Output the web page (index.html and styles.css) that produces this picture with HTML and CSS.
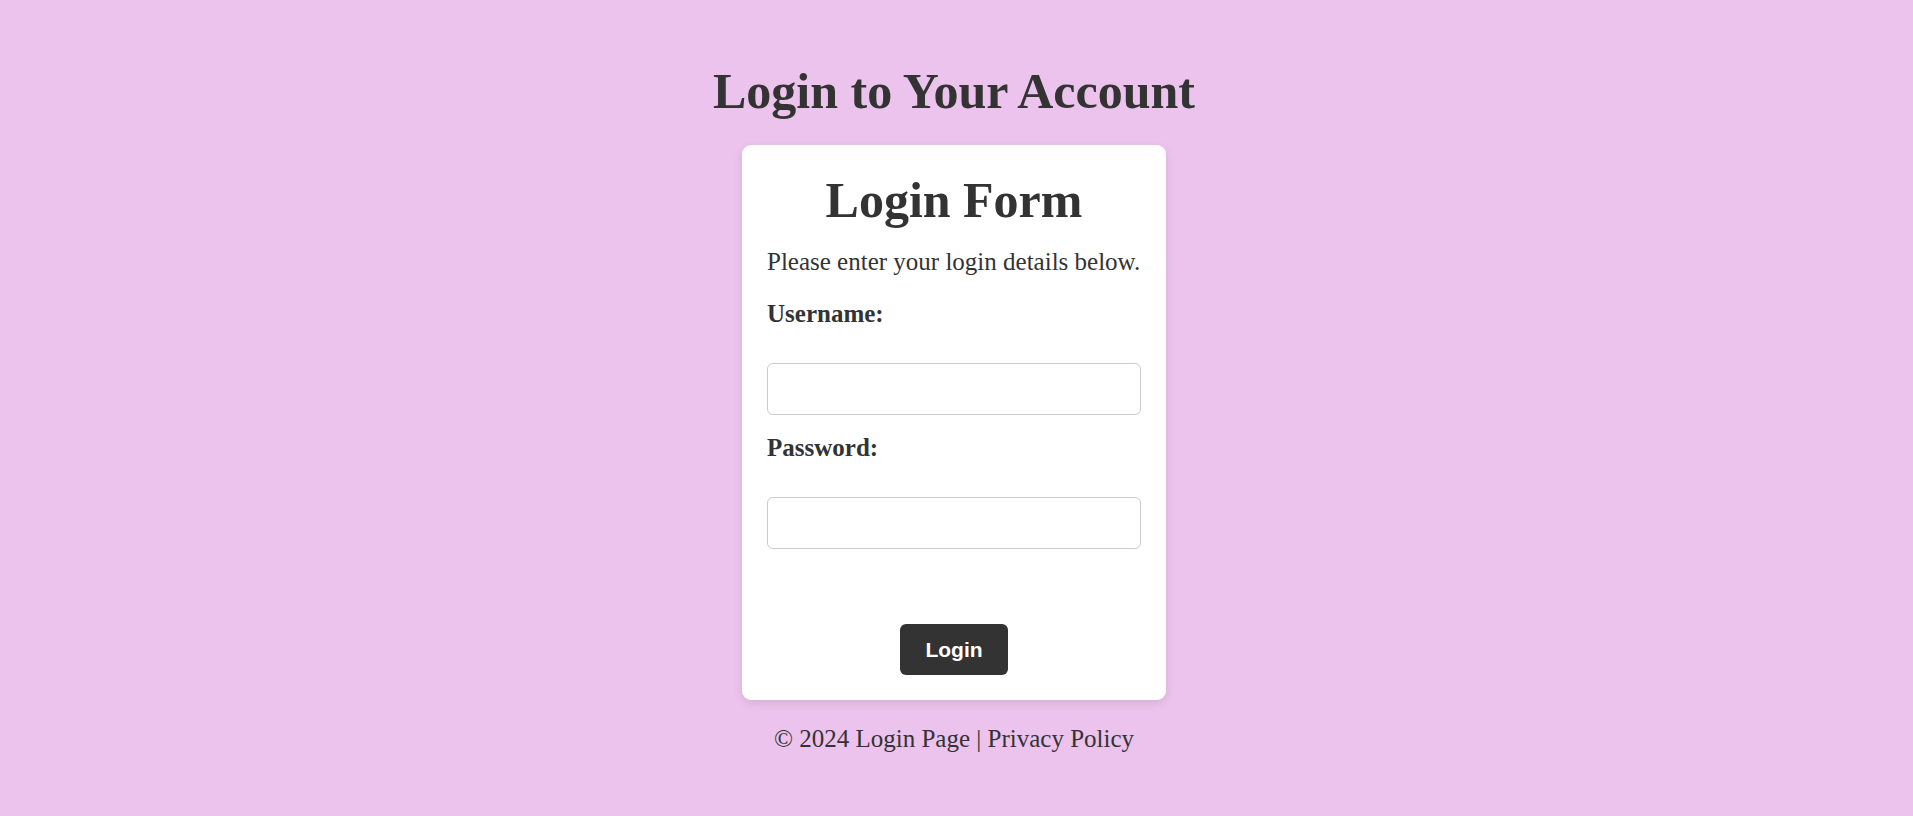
FILE: index.html
```html
<!DOCTYPE html>
<html lang="en">
  <head>
    <meta charset="UTF-8" />
    <meta name="viewport" content="width=device-width, initial-scale=1.0" />
    <title>Login Page</title>
    <link rel="stylesheet" href="styles.css">
  </head>
  <body>
    <div class="page">
      <h1>Login to Your Account</h1>

      <div class="login-card">
        <h2>Login Form</h2>
        <p class="intro">Please enter your login details below.</p>
        <form class="login-form" onsubmit="return false;">
          <label for="username">Username:</label>
          <input type="text" id="username" name="username" />
          <label for="password">Password:</label>
          <input type="password" id="password" name="password" />
          <div class="actions">
            <button type="submit">Login</button>
          </div>
        </form>
      </div>

      <footer class="footer">&copy; 2024 Login Page | Privacy Policy</footer>
    </div>
  </body>
</html>
```

FILE: styles.css
```css
body {
  margin: 0;
  background-color: #ecc3ec;
  font-family: "Liberation Serif", "Times New Roman", serif;
  color: #333;
}
.page {
  display: flex;
  flex-direction: column;
  align-items: center;
  padding: 62px 5px 40px 0;
}
h1 {
  margin: 0;
  font-size: 50px;
  line-height: 58px;
  text-align: center;
}
.login-card {
  box-sizing: border-box;
  width: 424px;
  margin-top: 25px;
  padding: 26px 25px 25px;
  background-color: #fff;
  border-radius: 9px;
  box-shadow: 0 3px 10px rgba(0, 0, 0, 0.1);
}
h2 {
  margin: 0;
  font-size: 50px;
  line-height: 58px;
  text-align: center;
}
.intro {
  margin: 18px 0 0;
  font-size: 25px;
  line-height: 29px;
}
.login-form {
  display: flex;
  flex-direction: column;
}
.login-form label {
  margin-top: 23px;
  font-size: 25px;
  line-height: 29px;
  font-weight: bold;
}
.login-form label + input {
  margin-top: 35px;
}
.login-form input + label {
  margin-top: 18px;
}
.login-form input {
  box-sizing: border-box;
  width: 100%;
  height: 52px;
  padding: 0 12px;
  border: 1px solid #ccc;
  border-radius: 6px;
  font-size: 20px;
}
.actions {
  display: flex;
  justify-content: center;
  margin-top: 75px;
}
.actions button {
  height: 51px;
  padding: 0 25px;
  border: none;
  border-radius: 6px;
  background-color: #333;
  color: #fff;
  font-family: "Liberation Sans", Arial, sans-serif;
  font-size: 21px;
  font-weight: bold;
  cursor: pointer;
}
.footer {
  margin-top: 24px;
  font-size: 25px;
  line-height: 29px;
  text-align: center;
}
```
